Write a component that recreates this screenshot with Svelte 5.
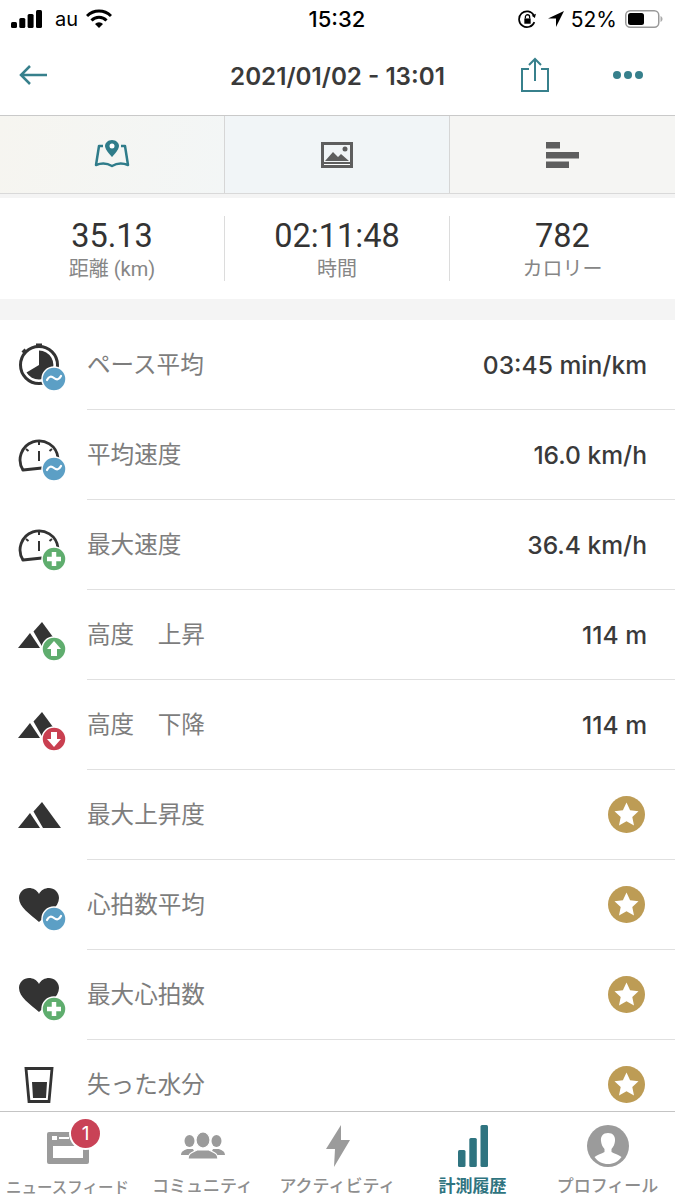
<script>
    const rows = [
        { icon: 'watch', badge: 'avg', label: 'ペース平均', value: '03:45 min/km' },
        { icon: 'gauge', badge: 'avg', label: '平均速度', value: '16.0 km/h' },
        { icon: 'gauge', badge: 'plus', label: '最大速度', value: '36.4 km/h' },
        { icon: 'hills', badge: 'up', label: '高度　上昇', value: '114 m' },
        { icon: 'hills', badge: 'down', label: '高度　下降', value: '114 m' },
        { icon: 'hills', badge: null, label: '最大上昇度', value: null },
        { icon: 'heart', badge: 'avg', label: '心拍数平均', value: null },
        { icon: 'heart', badge: 'plus', label: '最大心拍数', value: null },
        { icon: 'glass', badge: null, label: '失った水分', value: null }
    ];

    const stats = [
        { value: '35.13', label: '距離 (km)' },
        { value: '02:11:48', label: '時間' },
        { value: '782', label: 'カロリー' }
    ];

    const badgeColors = { avg: '#5c9fc5', plus: '#5fad6e', up: '#5fad6e', down: '#c93f50' };
</script>

{#snippet rowIcon(icon, badge)}
    <svg class="row-icon" width="52" height="52" viewBox="0 0 52 52">
        {#if icon === 'watch'}
            <circle cx="21" cy="24" r="18.500" fill="none" stroke="#333" stroke-width="3" />
            <rect x="18" y="2.500" width="6" height="3" fill="#333" />
            <path d="M3.500 10.500l3-3 2.500 2.500-3 3z" fill="#333" />
            <path d="M21 9.500A14.500 14.500 0 1 1 8.500 31.500L21 24z" fill="#333" />
        {:else if icon === 'gauge'}
            <path d="M5 39A19 19 0 1 1 40 27" fill="none" stroke="#333" stroke-width="2.800" />
            <path d="M5 39l19-2" fill="none" stroke="#333" stroke-width="2.800" stroke-linecap="round" />
            <path d="M21 20v10M21 11v3M8 18l2.500 2M34 18l-2.500 2" fill="none" stroke="#333" stroke-width="2" />
        {:else if icon === 'hills'}
            <path d="M12 22L0 37H22z" fill="#333" />
            <path d="M24 11L43 37H25L15.500 20.500z" fill="#333" />
        {:else if icon === 'heart'}
            <path d="M21 41C12 33 1 26 1 17 1 11 6 7 11 7c4 0 8 2 10 6 2-4 6-6 10-6 5 0 10 4 10 10 0 9-11 16-20 24z" fill="#333" />
        {:else if icon === 'glass'}
            <path d="M8 7.500h26l-3 33H11z" fill="none" stroke="#333" stroke-width="2.800" />
            <path d="M14 21h15l-1 16H15z" fill="#333" />
        {/if}
        {#if badge}
            <circle cx="36" cy="38" r="12" fill={badgeColors[badge]} stroke="#fff" stroke-width="1.500" />
            {#if badge === 'avg'}
                <path d="M29 39c2-4 4.500-4 7-2s5 2 7-2" fill="none" stroke="#fff" stroke-width="2.200" stroke-linecap="round" />
            {:else if badge === 'plus'}
                <path d="M36 31v14M29 38h14" stroke="#fff" stroke-width="4.500" />
            {:else if badge === 'up'}
                <path d="M36 30l7 8h-4v7h-6v-7h-4z" fill="#fff" />
            {:else}
                <path d="M36 46l7-8h-4v-7h-6v7h-4z" fill="#fff" />
            {/if}
        {/if}
    </svg>
{/snippet}

<div class="screen">
    <header class="status">
        <div class="status-side">
            <svg width="31" height="18" viewBox="0 0 31 18" fill="#000">
                <rect x="0" y="12" width="6" height="6" rx="1.500" />
                <rect x="8.300" y="8" width="6" height="10" rx="1.500" />
                <rect x="16.600" y="4" width="6" height="14" rx="1.500" />
                <rect x="25" y="0" width="6" height="18" rx="1.500" />
            </svg>
            <span class="carrier">au</span>
            <svg width="26" height="20" viewBox="0 0 26 20" fill="none" stroke="#000" stroke-width="3">
                <path d="M1 7a17 17 0 0 1 24 0M5.500 11.500a10.500 10.500 0 0 1 15 0" />
                <path d="M13 19l-4-4a5.500 5.500 0 0 1 8 0z" fill="#000" stroke="none" />
            </svg>
        </div>
        <span class="clock">15:32</span>
        <div class="status-side right">
            <svg width="19" height="19" viewBox="0 0 18 18" fill="none" stroke="#000" stroke-width="1.600">
                <path d="M15.500 11.500A7.500 7.500 0 1 1 15 5" />
                <path d="M17 3.500l-1 4-3-2z" fill="#000" stroke="none" />
                <rect x="6" y="8" width="6" height="5" fill="#000" stroke="none" />
                <path d="M7 8V6.500a2 2 0 0 1 4 0V8" stroke-width="1.200" />
            </svg>
            <svg class="arrow" width="18" height="18" viewBox="0 0 18 18" fill="#000">
                <path d="M17 1L1 8.500h8V17z" />
            </svg>
            <span class="percent">52%</span>
            <svg width="38" height="20" viewBox="0 0 38 20">
                <rect x="0.750" y="1.750" width="33" height="16.500" rx="4.500" fill="none" stroke="#999" stroke-width="1.500" />
                <rect x="3" y="4" width="16" height="12" rx="2.500" fill="#000" />
                <path d="M35.500 7v6c1.200-.5 2-1.700 2-3s-.8-2.500-2-3z" fill="#aaa" />
            </svg>
        </div>
    </header>

    <nav class="topbar">
        <svg class="back" width="30" height="22" viewBox="0 0 30 22" fill="none" stroke="#37808c" stroke-width="2.500">
            <path d="M29 11H3M12 2l-9 9 9 9" />
        </svg>
        <h1>2021/01/02 - 13:01</h1>
        <svg class="share" width="30" height="36" viewBox="0 0 30 36" fill="none" stroke="#37808c" stroke-width="2">
            <path d="M9 12H2v22h26V12h-7M15 24V2M9 8l6-6 6 6" />
        </svg>
        <div class="dots"><i></i><i></i><i></i></div>
    </nav>

    <div class="tabs">
        <button class="tab">
            <svg width="36" height="30" viewBox="0 1 36 30" fill="none" stroke="#2f7c8a" stroke-width="2.500">
                <path d="M9 7H5L2 26c5-2 11-2 16 1 5-3 11-3 16-1L31 7h-4" stroke-linejoin="round" />
                <path d="M18 1c-4 0-7 3-7 6 0 4 7 11 7 11s7-7 7-11c0-3-3-6-7-6z" fill="#2f7c8a" stroke="none" />
                <circle cx="18" cy="7" r="2.500" fill="#fff" stroke="none" />
            </svg>
        </button>
        <button class="tab">
            <svg width="32" height="26" viewBox="0 0 32 26" fill="#5e5e5e">
                <path fill-rule="evenodd" d="M0 0h32v26H0zM3 3v17h26V3z" />
                <path d="M4 19l8-9 5 5 3-3 8 7z" />
                <circle cx="24" cy="7" r="2.500" />
                <rect x="3" y="22" width="26" height="1" fill="#fff" />
            </svg>
        </button>
        <button class="tab">
            <svg width="34" height="26" viewBox="0 0 34 26" fill="#5e5e5e">
                <rect x="0" y="0" width="14" height="6.500" />
                <rect x="0" y="10" width="33" height="6.500" />
                <rect x="0" y="19.500" width="23" height="6.500" />
            </svg>
        </button>
    </div>

    <section class="stats">
        {#each stats as stat}
            <div class="stat">
                <span class="stat-value">{stat.value}</span>
                <span class="stat-label">{stat.label}</span>
            </div>
        {/each}
    </section>

    <div class="list">
        {#each rows as row}
            <div class="row">
                <div class="icon-cell">
                    {@render rowIcon(row.icon, row.badge)}
                </div>
                <div class="row-body">
                    <span class="row-label">{row.label}</span>
                    {#if row.value}
                        <span class="row-value">{row.value}</span>
                    {:else}
                        <svg class="premium" width="37" height="37" viewBox="0 0 37 37">
                            <circle cx="18.500" cy="18.500" r="18.500" fill="#bd9c55" />
                            <path d="M18.500 6.500l3.600 7.800 8.400 1-6.200 5.800 1.700 8.400-7.500-4.200-7.500 4.200 1.700-8.400-6.200-5.800 8.400-1z" fill="#fff" />
                        </svg>
                    {/if}
                </div>
            </div>
        {/each}
    </div>

    <footer class="tabbar">
        <div class="tabbar-item news">
            <svg class="low" width="42" height="32" viewBox="0 0 42 32" fill="#9b9b9b">
                <path fill-rule="evenodd" d="M2 0H42V30a2 2 0 0 1-2 2H2a2 2 0 0 1-2-2V2a2 2 0 0 1 2-2zM6 14V26H36V14zM5 4V8H10V4zM12 5V7H22V5z" />
            </svg>
            <span class="badge">1</span>
            <span>ニュースフィード</span>
        </div>
        <div class="tabbar-item">
            <svg class="low" width="44" height="27" viewBox="0 0 44 27" fill="#9b9b9b">
                <ellipse cx="8.500" cy="9" rx="5" ry="6" />
                <ellipse cx="35.500" cy="9" rx="5" ry="6" />
                <path d="M0 23c0-4 4-5 6-6h6l3 6zM29 23l3-6h6c2 1 6 2 6 6z" />
                <ellipse cx="22" cy="8" rx="7" ry="8" stroke="#fff" stroke-width="1.200" />
                <path d="M7 27c0-6 5-7 9-9h12c4 2 9 3 9 9z" stroke="#fff" stroke-width="1.200" />
            </svg>
            <span>コミュニティ</span>
        </div>
        <div class="tabbar-item">
            <svg width="24" height="42" viewBox="0 0 24 42" fill="#9b9b9b">
                <path d="M15 0L0 24h9l-1 18 16-27h-9z" />
            </svg>
            <span>アクティビティ</span>
        </div>
        <div class="tabbar-item active">
            <svg width="30" height="42" viewBox="0 0 30 42" fill="#2f7480">
                <rect x="0" y="25" width="7.500" height="17" rx="1.500" />
                <rect x="11.300" y="13" width="7.500" height="29" rx="1.500" />
                <rect x="22.500" y="0" width="7.500" height="42" rx="1.500" />
            </svg>
            <span>計測履歴</span>
        </div>
        <div class="tabbar-item">
            <svg width="42" height="42" viewBox="0 0 42 42">
                <circle cx="21" cy="21" r="21" fill="#9b9b9b" />
                <path d="M21 8c-5 0-7.500 3.500-7 8 .3 3 1.500 6 3.500 8v3c-3 2-7 2.500-10 5 3 4.500 8 7 13.500 7s10.500-2.500 13.500-7c-3-2.500-7-3-10-5v-3c2-2 3.200-5 3.500-8 .5-4.500-2-8-7-8z" fill="#fff" />
            </svg>
            <span>プロフィール</span>
        </div>
    </footer>
</div>

<style>
    :global(body) {
        margin: 0;
        background: #fff;
    }

    .screen {
        width: 675px;
        height: 1200px;
        display: flex;
        flex-direction: column;
        overflow: hidden;
        font-family: "Noto Sans CJK JP", "Noto Sans", sans-serif;
        background: #fff;
    }

    .status {
        height: 38px;
        flex: none;
        display: grid;
        grid-template-columns: 1fr auto 1fr;
        align-items: center;
        padding: 0 12px 0 11px;
        font-family: Inter, "Liberation Sans", sans-serif;
        color: #000;
    }

    .status-side {
        display: flex;
        align-items: center;
        gap: 7px;
    }

    .status-side.right {
        justify-content: flex-end;
        gap: 6px;
    }

    .carrier {
        font-size: 20px;
        margin: 0 1px 0 6px;
    }

    .clock {
        font-size: 22px;
        font-weight: 500;
    }

    .arrow {
        margin-left: 4px;
    }

    .percent {
        font-size: 21px;
        margin-right: 2px;
    }

    .topbar {
        flex: none;
        display: flex;
        align-items: center;
        height: 73px;
        padding-bottom: 4px;
        border-bottom: 1px solid #c9c9c9;
        position: relative;
    }

    .back {
        margin-left: 18px;
    }

    .topbar h1 {
        position: absolute;
        left: 0;
        right: 0;
        margin: 4px 0 0;
        text-align: center;
        font-family: Inter, "Open Sans", sans-serif;
        font-size: 24.200px;
        font-weight: 600;
        color: #3a3a3a;
    }

    .share {
        margin-left: auto;
    }

    .dots {
        display: flex;
        gap: 3px;
        margin: 0 32px 0 63px;
    }

    .dots i {
        width: 8px;
        height: 8px;
        border-radius: 50%;
        background: #37808c;
    }

    .tabs {
        height: 77px;
        flex: none;
        display: grid;
        grid-template-columns: repeat(3, 1fr);
        background: #f5f5f3;
        border-bottom: 1px solid #d9d9d9;
    }

    .tab {
        all: unset;
        display: flex;
        align-items: center;
        justify-content: center;
        border-right: 1px solid #d6d6d6;
    }

    .tab:first-child {
        background: linear-gradient(100deg, #f6f5f0, #f3f6f6);
    }

    .tab:nth-child(2) {
        background: #f1f5f7;
    }

    .tab:last-child {
        border-right: 0;
    }

    .stats {
        flex: none;
        height: 105px;
        display: grid;
        grid-template-columns: repeat(3, 1fr);
        align-items: center;
        box-sizing: border-box;
        border-top: 4px solid #f4f4f4;
    }

    .stat {
        height: 65px;
        padding-top: 1px;
        box-sizing: border-box;
        display: flex;
        flex-direction: column;
        align-items: center;
        justify-content: flex-start;
        border-right: 1px solid #dcdcdc;
    }

    .stat:last-child {
        border-right: 0;
    }

    .stat-value {
        font-family: Roboto, sans-serif;
        font-size: 32.500px;
        line-height: 38px;
        color: #333;
    }

    .stat-label {
        font-family: Roboto, "Noto Sans CJK JP", sans-serif;
        font-size: 20px;
        line-height: 26px;
        margin-top: 1px;
        color: #868686;
    }

    .list {
        flex: 1;
        min-height: 0;
        border-top: 21px solid #f4f4f4;
        overflow: hidden;
    }

    .row {
        height: 90px;
        display: flex;
    }

    .icon-cell {
        width: 87px;
        flex: none;
        display: flex;
        align-items: center;
        padding-left: 18px;
        box-sizing: border-box;
    }

    .row-icon {
        flex: none;
        position: relative;
        top: 2px;
    }

    .row-body {
        flex: 1;
        display: flex;
        align-items: center;
        justify-content: space-between;
        padding-right: 28px;
        border-bottom: 1px solid #e0e0e0;
        box-sizing: border-box;
    }

    .row-label {
        font-size: 23.600px;
        color: #7d7d7d;
        position: relative;
        top: -2px;
    }

    .row-value {
        font-family: Inter, "Open Sans", sans-serif;
        font-size: 24.600px;
        font-weight: 500;
        color: #3a3a3a;
    }

    .premium {
        margin-right: 2px;
    }

    .tabbar {
        height: 89px;
        flex: none;
        display: grid;
        grid-template-columns: repeat(5, 1fr);
        background: #fff;
        border-top: 1px solid #c4c4c4;
        box-sizing: border-box;
    }

    .tabbar-item {
        position: relative;
        display: flex;
        flex-direction: column;
        align-items: center;
        justify-content: flex-end;
        padding-bottom: 3px;
        font-size: 17px;
        font-weight: 500;
        color: #8e8e8e;
        white-space: nowrap;
    }

    .tabbar-item.news {
        font-size: 15.500px;
    }

    .tabbar-item svg {
        margin-bottom: auto;
        margin-top: 13px;
    }

    .tabbar-item svg.low {
        margin-top: 20px;
    }

    .tabbar-item.active {
        color: #2f7480;
        font-weight: 700;
    }

    .badge {
        position: absolute;
        top: 7px;
        left: 71px;
        width: 29px;
        height: 29px;
        border-radius: 50%;
        background: #c94256;
        box-shadow: 0 0 0 2px #fff;
        color: #fff;
        font-family: Inter, sans-serif;
        font-size: 19px;
        font-weight: 400;
        line-height: 29px;
        text-align: center;
    }
</style>
